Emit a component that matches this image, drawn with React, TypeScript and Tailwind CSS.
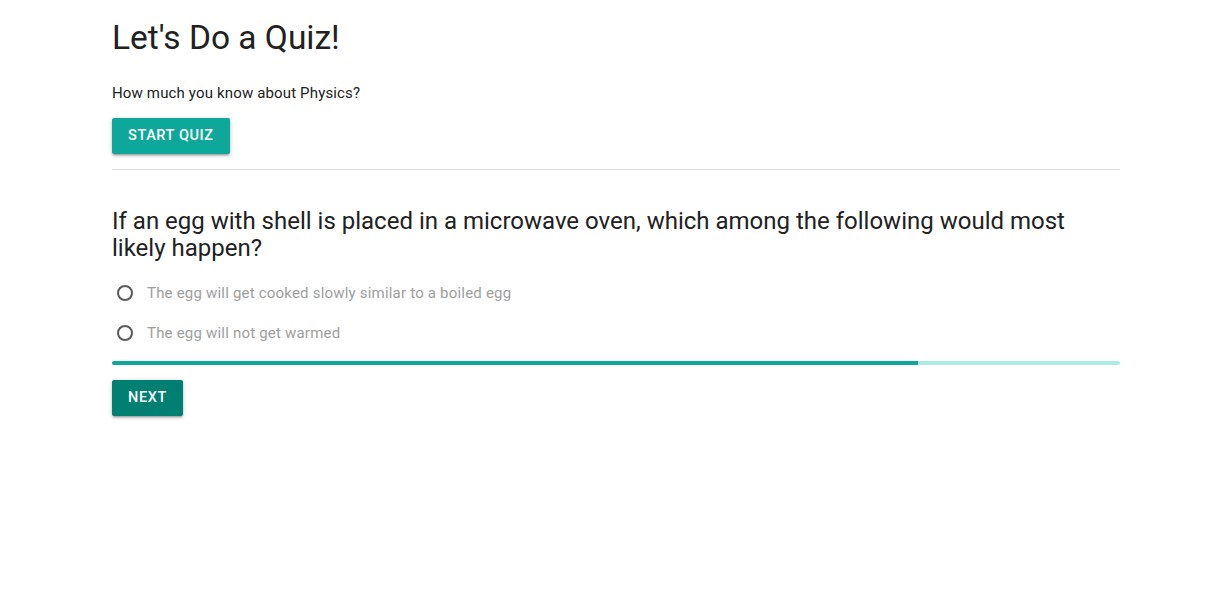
import React from "react";

function Radio() {
  return (
    <span className="inline-block w-[16px] h-[16px] rounded-full border-2 border-[#5a5a5a] shrink-0" />
  );
}

const shadow =
  "shadow-[0_2px_2px_0_rgba(0,0,0,0.14),0_3px_1px_-2px_rgba(0,0,0,0.12),0_1px_5px_0_rgba(0,0,0,0.2)]";

export default function App() {
  return (
    <div className="min-h-[600px] bg-white font-['Roboto',sans-serif] text-[#212121]">
      <div className="w-[1008px] ml-[112px]">
        <h1 className="text-[33.5px] leading-[40px] pt-[18px] font-normal">Let's Do a Quiz!</h1>
        <p className="text-[15px] tracking-[0.15px] leading-[20px] mt-[25px] text-[#212121]">How much you know about Physics?</p>
        <button className={`mt-[15px] h-[36px] px-[16px] rounded-[2px] bg-[#0ea89a] text-white text-[14.5px] font-medium tracking-[0.6px] uppercase ${shadow}`}>
          Start Quiz
        </button>
        <hr className="mt-[15px] border-0 border-t border-[#e0e0e0]" />
        <h2 className="mt-[38px] text-[24px] leading-[27px] font-normal">
          If an egg with shell is placed in a microwave oven, which among the following would most likely happen?
        </h2>
        <div className="mt-[11px] flex flex-col">
          <label className="flex items-center h-[40px] text-[15px] tracking-[0.2px] leading-[20px] text-[#9e9e9e]">
            <span className="ml-[5px] mr-[14px] flex"><Radio /></span>
            The egg will get cooked slowly similar to a boiled egg
          </label>
          <label className="flex items-center h-[40px] text-[15px] tracking-[0.2px] leading-[20px] text-[#9e9e9e]">
            <span className="ml-[5px] mr-[14px] flex"><Radio /></span>
            The egg will not get warmed
          </label>
        </div>
        <div className="mt-[8px] h-[4px] w-full bg-[#acece6] rounded-[2px] overflow-hidden">
          <div className="h-full bg-[#0ea89a]" style={{ width: "80%" }} />
        </div>
        <button className={`mt-[15px] h-[36px] px-[16px] rounded-[2px] bg-[#007f72] text-white text-[14.5px] font-medium tracking-[0.6px] uppercase ${shadow}`}>
          Next
        </button>
      </div>
    </div>
  );
}
